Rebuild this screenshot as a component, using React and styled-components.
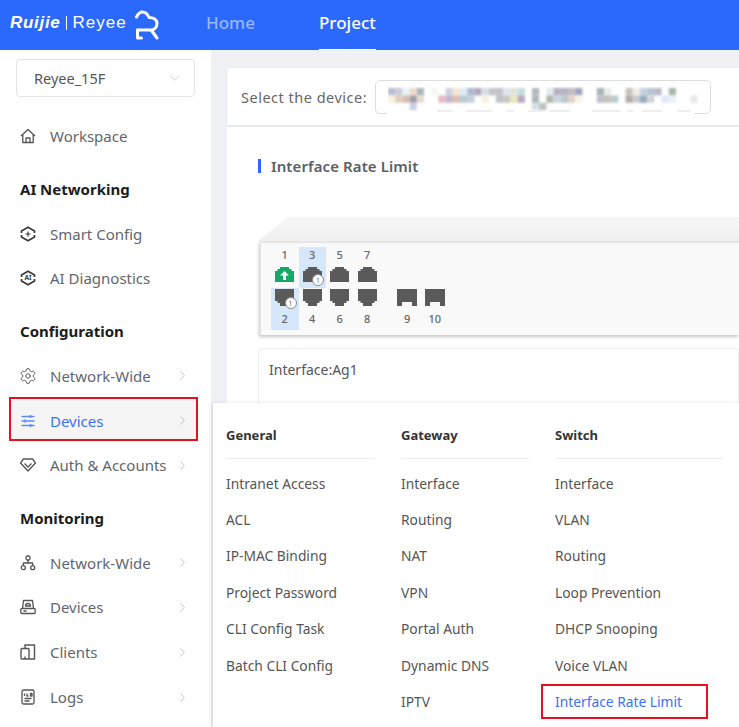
import styled, { createGlobalStyle } from 'styled-components'
import { ChevronRight, ChevronDown, Settings } from 'lucide-react'

const GlobalStyle = createGlobalStyle`
  html, body {
    margin: 0;
    padding: 0;
    height: 100%;
    overflow: hidden;
  }
  body {
    font-family: 'Noto Sans', 'Open Sans', sans-serif;
    color: #555;
    background: #fff;
  }
`

const Page = styled.div`
  width: 739px;
  height: 727px;
  position: relative;
  overflow: hidden;
  display: flex;
  flex-direction: column;
`

const TopBar = styled.header`
  height: 50px;
  flex: none;
  background: #2b69fc;
  display: flex;
  align-items: stretch;
`

const Logo = styled.div`
  width: 206px;
  display: flex;
  align-items: center;
  padding-left: 10px;
  box-sizing: border-box;
  color: #fff;
  svg {
    margin-left: 8px;
    margin-top: 0;
  }
`

const BrandText = styled.div`
  display: flex;
  align-items: center;
  margin-bottom: 4px;
`

const Brand = styled.span`
  font-family: 'Liberation Sans', sans-serif;
  font-size: 17px;
  font-weight: 700;
  font-style: italic;
  letter-spacing: 0.7px;
`

const BrandLight = styled.span`
  font-family: 'Liberation Sans', sans-serif;
  font-size: 17px;
  margin-left: 5px;
  padding-left: 6px;
  border-left: 1px solid #fff;
  line-height: 14px;
  letter-spacing: 1px;
`

const TopNav = styled.nav`
  display: flex;
  gap: 64px;
`

const TopLink = styled.a`
  display: flex;
  align-items: center;
  height: 51px;
  box-sizing: border-box;
  padding-bottom: 4px;
  font-size: 17px;
  font-weight: 500;
  color: ${(props) => (props.$active ? '#fff' : '#98b6fd')};
  border-bottom: 2px solid ${(props) => (props.$active ? '#fff' : 'transparent')};
`

const Body = styled.div`
  flex: 1;
  display: flex;
  min-height: 0;
`

const Sidebar = styled.aside`
  width: 211px;
  flex: none;
  background: #fff;
  box-sizing: border-box;
  padding-top: 9px;
`

const ProjectSelect = styled.div`
  width: 179px;
  height: 38px;
  margin: 0 0 17px 16px;
  box-sizing: border-box;
  border: 1px solid #e4e4e4;
  border-radius: 4px;
  display: flex;
  align-items: center;
  justify-content: space-between;
  padding: 0 10px 0 17px;
  font-size: 14.5px;
  color: #555;
  svg {
    color: #c8c8c8;
  }
`

const Section = styled.div`
  height: 44.8px;
  margin-top: 7.7px;
  display: flex;
  align-items: center;
  padding-left: 20px;
  font-size: 15px;
  font-weight: 700;
  color: #1c1c1c;
`

const NavRow = styled.div`
  height: 44.8px;
  display: flex;
  align-items: center;
  padding-left: 20px;
  position: relative;
  font-size: 15px;
  color: ${(props) => (props.$active ? '#3d6ffb' : '#5f6670')};
  ${(props) => props.$active && 'z-index: 1;'}
`

const ActiveFrame = styled.div`
  position: absolute;
  left: 9px;
  top: -1px;
  width: 189px;
  height: 44px;
  box-sizing: border-box;
  border: 2px solid #e8101f;
  background: #f5f5f5;
  z-index: -1;
`

const NavIcon = styled.span`
  width: 16px;
  height: 16px;
  margin-right: 14px;
  display: flex;
  color: ${(props) => (props.$active ? '#5f8bfb' : '#555')};
`

const Arrow = styled(ChevronRight)`
  position: absolute;
  left: 175px;
  top: 15px;
  color: #b8b8b8;
`

const GearGlyph = styled(Settings)`
  margin: -1px;
  flex: none;
`

const Main = styled.main`
  flex: 1;
  background: #eff1f5;
  padding: 18px 0 0 16px;
  min-width: 0;
`

const DeviceBar = styled.div`
  height: 57px;
  background: #fff;
  border-radius: 4px 0 0 0;
  display: flex;
  align-items: center;
  padding-left: 14px;
  box-shadow: 0 1px 3px rgba(0, 0, 0, 0.08);
  font-size: 14.5px;
  letter-spacing: 0.5px;
  color: #666;
`

const DeviceField = styled.div`
  margin-left: 8px;
  width: 336px;
  height: 34px;
  box-sizing: border-box;
  border: 1px solid #ddd;
  border-radius: 5px;
  display: flex;
  align-items: center;
  justify-content: center;
  position: relative;
  &::after {
    content: '';
    position: absolute;
    left: 11px;
    right: 16px;
    bottom: -1px;
    height: 2px;
    background: #fff;
  }
`

const Content = styled.section`
  margin-top: 2px;
  height: 600px;
  background: #fff;
  padding: 32px 0 0 31px;
`

const Heading = styled.h2`
  margin: 0;
  font-size: 15px;
  font-weight: 600;
  letter-spacing: 0.1px;
  color: #5a5f66;
  line-height: 14px;
  padding-left: 10px;
  border-left: 3px solid #2b69fc;
`

const SwitchTop = styled.div`
  margin-top: 44px;
  height: 24px;
  background: linear-gradient(#f7f7f7, #efefef);
  clip-path: polygon(0 100%, 30px 0, 100% 0, 100% 100%);
`

const SwitchFace = styled.div`
  margin-left: 2px;
  height: 94px;
  box-sizing: border-box;
  background: #f9f9fa;
  border-top: 2px solid #e6e6e6;
  border-left: 1px solid #e2e2e2;
  box-shadow: -1px 2px 3px rgba(0, 0, 0, 0.22);
  display: flex;
  padding: 4px 0 0 10px;
`

const PortCol = styled.div`
  width: 27.5px;
  height: 83px;
  margin-left: ${(props) => props.$offset || 0}px;
  display: grid;
  grid-template-rows: 41px 42px;
  font-size: 11px;
  font-weight: 500;
  color: #666;
  text-align: center;
`

const PortCell = styled.div`
  background: ${(props) => (props.$selected ? '#d6e7fc' : 'transparent')};
  display: flex;
  flex-direction: column;
  align-items: center;
  justify-content: ${(props) => (props.$bottom ? 'flex-start' : 'flex-end')};
  line-height: 14px;
  gap: ${(props) => (props.$bottom ? '6px' : '5px')};
  padding: ${(props) => (props.$bottom ? '1px 0 0' : '0 0 6px')};
  box-sizing: border-box;
  position: relative;
`

const PortBadge = styled.span`
  position: absolute;
  right: 2px;
  ${(props) => (props.$bottom ? 'top: 9px;' : 'bottom: 2px;')}
  width: 12px;
  height: 12px;
  box-sizing: border-box;
  border-radius: 50%;
  border: 1px solid #8a8a8a;
  background: #fff;
  color: #777;
  font-size: 7.5px;
  font-weight: 400;
  line-height: 10px;
  text-align: center;
`

const InfoBox = styled.div`
  margin-top: 13px;
  height: 100px;
  box-sizing: border-box;
  border: 1px solid #ececec;
  border-radius: 4px;
  padding: 11px 10px;
  font-size: 14px;
  color: #555;
`

const Flyout = styled.div`
  position: absolute;
  left: 213px;
  top: 403px;
  right: 0;
  bottom: 0;
  background: #fff;
  box-shadow: -2px 0 4px rgba(0, 0, 0, 0.1);
  display: grid;
  grid-template-columns: 149px 128px 167px;
  column-gap: 26px;
  padding-left: 13px;
  align-content: start;
  z-index: 2;
`

const FlyoutTitle = styled.div`
  height: 56px;
  box-sizing: border-box;
  padding-top: 22px;
  line-height: 20px;
  border-bottom: 1px solid #ececec;
  font-size: 13px;
  font-weight: 700;
  color: #333;
  margin-bottom: 6px;
`

const FlyoutItem = styled.div`
  height: 36.4px;
  display: flex;
  align-items: center;
  font-size: 13.8px;
  color: ${(props) => (props.$active ? '#3d6ffb' : '#555')};
  position: relative;
`

const ItemFrame = styled.span`
  position: absolute;
  left: -14px;
  top: 1px;
  width: 167px;
  height: 35px;
  box-sizing: border-box;
  border: 2px solid #e8101f;
`

const icon = { width: 16, height: 16, viewBox: '0 0 16 16', fill: 'none', stroke: 'currentColor', strokeWidth: 1.3, strokeLinejoin: 'round' }

const HomeIcon = () => (
  <svg {...icon}>
    <path d="M1 8 8 1.500 15 8M2.800 6.500V14.500h10.400V6.500M6 14.500v-4.500h4v4.500" />
  </svg>
)

const HexIcon = ({ children }) => (
  <svg {...icon} strokeWidth={1.7} color="#3a3a3a">
    <path d="M1.500 7V5L8 1.300 14.500 5v2" />
    <path d="M1.500 9v2L8 14.700 14.500 11V9" />
    {children}
  </svg>
)

const SlidersIcon = () => (
  <svg {...icon}>
    <path d="M1.500 3.500h13M1.500 8h13M1.500 12.500h13" />
    <path d="M10.500 2v3M5 6.500v3M10.500 11v3" strokeWidth={1.6} />
  </svg>
)

const ShieldIcon = () => (
  <svg {...icon}>
    <path d="M3.500 2h9L15.500 6 8 14 .5 6z" />
    <path d="M4.500 6.500 8 10l3.500-3.500" />
  </svg>
)

const TopologyIcon = () => (
  <svg {...icon}>
    <rect x="6" y="1" width="4" height="4" rx="1.500" />
    <circle cx="3.300" cy="12.700" r="2" />
    <circle cx="12.700" cy="12.700" r="2" />
    <path d="M8 5v3M3.300 10.700V8h9.400v2.700" />
  </svg>
)

const DeviceIcon = () => (
  <svg {...icon}>
    <path d="M2.500 9.500 3.500 1.500h9l1 8" />
    <rect x=".8" y="9.500" width="14.400" height="5" rx="1" />
    <path d="M5.500 7a2.500 2.500 0 0 1 5 0zM3.500 12h3" />
  </svg>
)

const ClientsIcon = () => (
  <svg {...icon} strokeWidth={1.4}>
    <path d="M5 4.500V1h9.500v14H9" />
    <rect x="1" y="4.500" width="8" height="10.500" rx="1" />
    <path d="M5 12.500v2.500" />
  </svg>
)

const LogsIcon = () => (
  <svg {...icon}>
    <rect x="2" y="1" width="12" height="14" rx="1.500" />
    <path d="M4.500 4.500V7M7 4.500V7h1.500M10.500 4.500h1.500V7h-1.500zM4.500 9.500h7M4.500 12h5" />
  </svg>
)

// cloud shaped R next to the brand name
const RMark = () => (
  <svg width="25" height="30" viewBox="0 0 25 30" fill="none" stroke="#fff" strokeWidth="3" strokeLinecap="round" strokeLinejoin="round">
    <path d="M1.500 7C3 4 5 2 7.500 2c3 0 5 2 6.500 5.500 4.500 0 8 2 8 6 0 4-3 6.500-6 6.500H2.500" />
    <path d="M2.500 20v8h4M16.500 20.500l5.500 7.500" />
  </svg>
)

const PortTop = ({ color = '#5a5a5a', up }) => (
  <svg width="19" height="15" viewBox="0 0 19 15">
    <path d="M0 4h2.500V2H5V0h9v2h2.500v2H19v11H0z" fill={color} />
    {up && <path d="M9.500 4 14 8.500h-3V13H8V8.500H5z" fill="#fff" />}
  </svg>
)

const PortBottom = () => (
  <svg width="19" height="17" viewBox="0 0 19 17">
    <path d="M0 0h19v12h-2.500v2H14v3H5v-3H2.500v-2H0z" fill="#5a5a5a" />
  </svg>
)

const PortSfp = () => (
  <svg width="20" height="17" viewBox="0 0 20 17">
    <path d="M0 0h20v17h-5v-4H5v4H0z" fill="#5a5a5a" />
  </svg>
)

// blurred device name, one rect per mosaic block
const mosaic = [
  ['#b8c0d4', 0, 0], ['#c9cdd8', 1, 0], ['#e6f2f8', 2, 0], ['#f3d9c4', 3, 0], ['#a9b9bb', 4, 0], ['#f8f0e0', 0, 1], ['#d3bfb2', 2, 1], ['#e7dad2', 4, 1],
  ['#e0cfc0', 1, 1], ['#9d9fa8', 3, 1], ['#ccd0e6', 3, 2], ['#f4f8f0', 6, 0], ['#cfd3e0', 8, 0], ['#f7e6d0', 9, 0], ['#dcedf6', 10, 0],
  ['#aebad2', 11, 0], ['#b3a8ba', 12, 0], ['#d4e0e8', 13, 0], ['#e6b9c6', 7, 1], ['#c6b4cc', 8, 1], ['#dcc0b4', 9, 1], ['#b8cad4', 10, 1],
  ['#c6d0d4', 11, 1], ['#c3c6c8', 14, 0], ['#c2c2ca', 15, 0], ['#dfe6f4', 16, 0], ['#dfe4dc', 17, 0], ['#c3dcdc', 18, 0],
  ['#f8f0dc', 13, 1], ['#bfc2c6', 15, 1], ['#c8c8c0', 16, 1], ['#e8e8c0', 17, 1], ['#b8a8c0', 18, 1], ['#b4bcc0', 20, 0], ['#aeb8b6', 20, 1],
  ['#d4dfe8', 20, 2], ['#bcc4bc', 21, 2], ['#e0eaf0', 22, 0], ['#b4b0c0', 23, 0], ['#b8b4c4', 24, 0], ['#c4bcc0', 25, 0],
  ['#9ea4bc', 26, 0], ['#b0b8ac', 22, 1], ['#ccd4e0', 23, 1], ['#bcc8c8', 24, 1], ['#e4d0c8', 25, 1], ['#faf4e8', 26, 1], ['#a8b4b8', 29, 0],
  ['#e8ecec', 30, 0], ['#c0c0cc', 29, 1], ['#c4c4b8', 30, 1], ['#b8ccd0', 31, 1], ['#c8c4bc', 33, 0], ['#b4aca8', 33, 1], ['#f0ece4', 34, 0], ['#c4d0dc', 35, 0],
  ['#b4c4d0', 36, 0], ['#bcb8c8', 37, 0], ['#98acc0', 35, 1], ['#d0d4d8', 36, 1], ['#c8ccd0', 34, 1], ['#a8b8a8', 39, 0], ['#e0e8f8', 38, 1],
  ['#e8f0f8', 39, 1], ['#e8e8e8', 42, 1],
]

const mosaicDashes = [[49, 15], [78, 26], [119, 7], [140, 14], [161, 21], [204, 28], [239, 6], [254, 20], [289, 13]]

const DeviceMosaic = () => (
  <svg width="310" height="30" viewBox="0 0 310 30">
    <defs>
      <filter id="soft">
        <feGaussianBlur stdDeviation="0.8" />
      </filter>
    </defs>
    <g filter="url(#soft)">
      {mosaic.map(([fill, x, y]) => (
        <rect key={`${x}-${y}`} x={x * 7.2} y={y * 7.400 + 6} width="7.200" height="7.400" fill={fill} />
      ))}
    </g>
    {mosaicDashes.map(([x, width]) => (
      <rect key={x} x={x} y="28" width={width} height="2" fill="#eeeeee" />
    ))}
  </svg>
)

const ports = [
  { top: 1, bottom: 2, topIcon: <PortTop color="#12a866" up />, bottomIcon: <PortBottom />, bottomSelected: true, bottomBadge: true },
  { top: 3, bottom: 4, topIcon: <PortTop />, bottomIcon: <PortBottom />, topSelected: true, topBadge: true },
  { top: 5, bottom: 6, topIcon: <PortTop />, bottomIcon: <PortBottom /> },
  { top: 7, bottom: 8, topIcon: <PortTop />, bottomIcon: <PortBottom /> },
  { bottom: 9, bottomIcon: <PortSfp />, offset: 12.5 },
  { bottom: 10, bottomIcon: <PortSfp /> },
]

const navTop = [
  { section: 'AI Networking' },
  { label: 'Smart Config', icon: <HexIcon><path d="M8 5.500v5M5.500 8h5" strokeWidth={1.2} /></HexIcon> },
  { label: 'AI Diagnostics', icon: <HexIcon><text x="8" y="10.200" textAnchor="middle" fontSize="6.500" fontWeight="700" fill="currentColor" stroke="none">AI</text></HexIcon> },
  { section: 'Configuration' },
  { label: 'Network-Wide', icon: <GearGlyph size={18} strokeWidth={1.3} />, more: true },
  { label: 'Devices', icon: <SlidersIcon />, more: true, active: true },
  { label: 'Auth & Accounts', icon: <ShieldIcon />, more: true },
  { section: 'Monitoring' },
  { label: 'Network-Wide', icon: <TopologyIcon />, more: true },
  { label: 'Devices', icon: <DeviceIcon />, more: true },
  { label: 'Clients', icon: <ClientsIcon />, more: true },
  { label: 'Logs', icon: <LogsIcon />, more: true },
]

const menus = [
  { title: 'General', items: ['Intranet Access', 'ACL', 'IP-MAC Binding', 'Project Password', 'CLI Config Task', 'Batch CLI Config'] },
  { title: 'Gateway', items: ['Interface', 'Routing', 'NAT', 'VPN', 'Portal Auth', 'Dynamic DNS', 'IPTV'] },
  { title: 'Switch', items: ['Interface', 'VLAN', 'Routing', 'Loop Prevention', 'DHCP Snooping', 'Voice VLAN', 'Interface Rate Limit'] },
]

function App() {
  return (
    <Page>
      <GlobalStyle />
      <TopBar>
        <Logo>
          <BrandText>
            <Brand>Ruijie</Brand>
            <BrandLight>Reyee</BrandLight>
          </BrandText>
          <RMark />
        </Logo>
        <TopNav>
          <TopLink>Home</TopLink>
          <TopLink $active>Project</TopLink>
        </TopNav>
      </TopBar>
      <Body>
        <Sidebar>
          <ProjectSelect>
            Reyee_15F
            <ChevronDown size={18} strokeWidth={1.2} />
          </ProjectSelect>
          <NavRow>
            <NavIcon><HomeIcon /></NavIcon>
            Workspace
          </NavRow>
          {navTop.map((item, i) =>
            item.section ? (
              <Section key={i}>{item.section}</Section>
            ) : (
              <NavRow key={i} $active={item.active}>
                {item.active && <ActiveFrame />}
                <NavIcon $active={item.active}>{item.icon}</NavIcon>
                {item.label}
                {item.more && <Arrow size={15} strokeWidth={1.4} />}
              </NavRow>
            )
          )}
        </Sidebar>
        <Main>
          <DeviceBar>
            Select the device:
            <DeviceField>
              <DeviceMosaic />
            </DeviceField>
          </DeviceBar>
          <Content>
            <Heading>Interface Rate Limit</Heading>
            <SwitchTop />
            <SwitchFace>
              {ports.map((port) => (
                <PortCol key={port.bottom} $offset={port.offset}>
                  <PortCell $selected={port.topSelected}>
                    {port.top || ' '}
                    {port.topIcon}
                    {port.topBadge && <PortBadge>1</PortBadge>}
                  </PortCell>
                  <PortCell $bottom $selected={port.bottomSelected}>
                    {port.bottomIcon}
                    {port.bottom}
                    {port.bottomBadge && <PortBadge $bottom>1</PortBadge>}
                  </PortCell>
                </PortCol>
              ))}
            </SwitchFace>
            <InfoBox>Interface:Ag1</InfoBox>
          </Content>
        </Main>
      </Body>
      <Flyout>
        {menus.map((menu) => (
          <div key={menu.title}>
            <FlyoutTitle>{menu.title}</FlyoutTitle>
            {menu.items.map((item) => {
              const active = item === 'Interface Rate Limit'
              return (
                <FlyoutItem key={item} $active={active}>
                  {active && <ItemFrame />}
                  {item}
                </FlyoutItem>
              )
            })}
          </div>
        ))}
      </Flyout>
    </Page>
  )
}

export default App
